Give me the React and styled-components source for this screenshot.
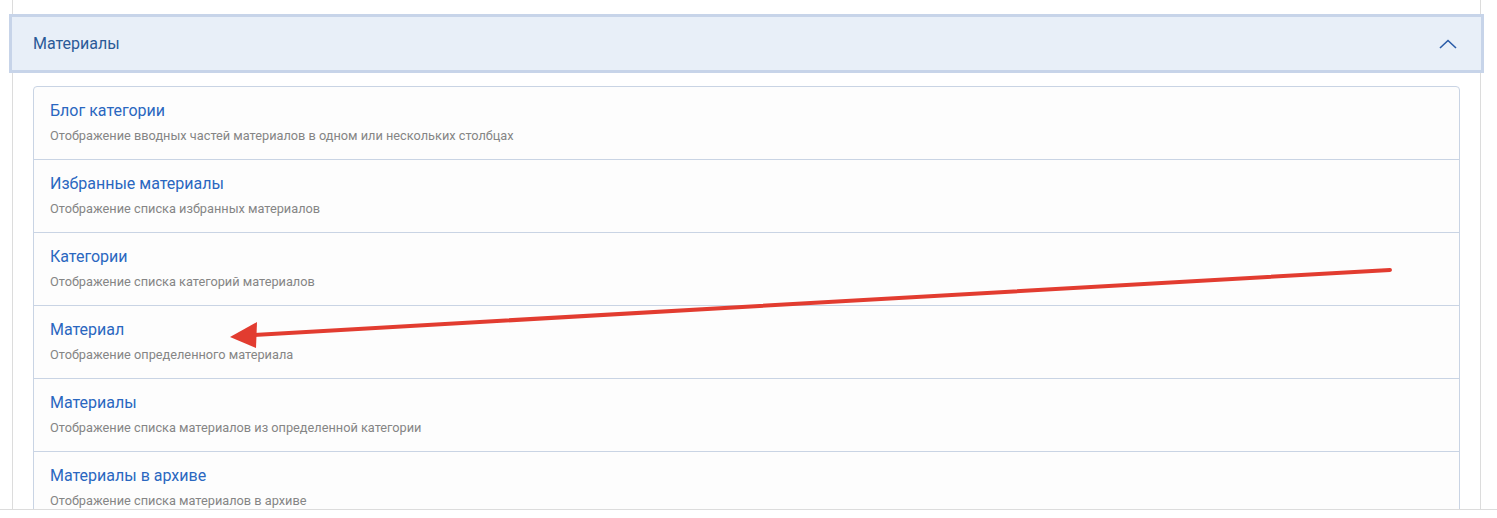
import styled, { createGlobalStyle } from "styled-components";

const GlobalStyle = createGlobalStyle`
  html, body {
    margin: 0;
    padding: 0;
    background: #fff;
    font-family: Roboto, "Noto Sans", sans-serif;
  }
`;

const items = [
  { title: "Блог категории", desc: "Отображение вводных частей материалов в одном или нескольких столбцах" },
  { title: "Избранные материалы", desc: "Отображение списка избранных материалов" },
  { title: "Категории", desc: "Отображение списка категорий материалов" },
  { title: "Материал", desc: "Отображение определенного материала" },
  { title: "Материалы", desc: "Отображение списка материалов из определенной категории" },
  { title: "Материалы в архиве", desc: "Отображение списка материалов в архиве" },
];

function App() {
  return (
    <>
      <GlobalStyle />
      <Page>
        <Viewport>
          <Panel>
            <Header>
              <HeaderTitle>Материалы</HeaderTitle>
              <svg width="18" height="10" viewBox="0 0 18 10" fill="none">
                <path d="M1 9 L9 1.5 L17 9" stroke="#2a5ca8" strokeWidth="1.6" />
              </svg>
            </Header>
            <List>
              {items.map((item) => (
                <Row key={item.title}>
                  <Title>{item.title}</Title>
                  <Desc>{item.desc}</Desc>
                </Row>
              ))}
            </List>
          </Panel>
        </Viewport>
        <Arrow width="1497" height="518" viewBox="0 0 1497 518">
          <line x1="1390" y1="270" x2="252" y2="335" stroke="#e23c30" strokeWidth="4" strokeLinecap="round" />
          <polygon points="230,337 257,322 256,348" fill="#e23c30" />
        </Arrow>
      </Page>
    </>
  );
}

const Page = styled.div`
  position: relative;
  height: 518px;
  overflow: hidden;
`;

const Viewport = styled.div`
  height: 510px;
  box-sizing: border-box;
  border-bottom: 1px solid #dcdcdc;
  overflow: hidden;
`;

const Panel = styled.div`
  margin-left: 12px;
  width: 1469px;
  min-height: 100%;
  border-left: 1px solid #dcdcdc;
  border-right: 1px solid #dcdcdc;
  padding-top: 14px;
  box-sizing: border-box;
`;

const Header = styled.div`
  display: flex;
  align-items: center;
  justify-content: space-between;
  margin: 0 -4px 0 -4px;
  height: 59px;
  box-sizing: border-box;
  background: #e8eff8;
  border: 3px solid #c7d4e9;
  padding: 0 24px 0 21px;
`;

const HeaderTitle = styled.span`
  font-size: 16px;
  color: #2b5a97;
`;

const List = styled.div`
  margin: 13px 20px 0 20px;
  border: 1px solid #c9d4e4;
  border-radius: 4px;
  background: #fdfdfd;
`;

const Row = styled.div`
  display: flex;
  flex-direction: column;
  gap: 4px;
  padding: 12px 16px 14px;
  border-bottom: 1px solid #c9d4e4;
`;

const Title = styled.div`
  font-size: 16px;
  line-height: 24px;
  color: #2a67c0;
`;

const Desc = styled.div`
  font-size: 12.75px;
  line-height: 18px;
  color: #858585;
`;

const Arrow = styled.svg`
  position: absolute;
  left: 0;
  top: 0;
  pointer-events: none;
`;

export default App;
